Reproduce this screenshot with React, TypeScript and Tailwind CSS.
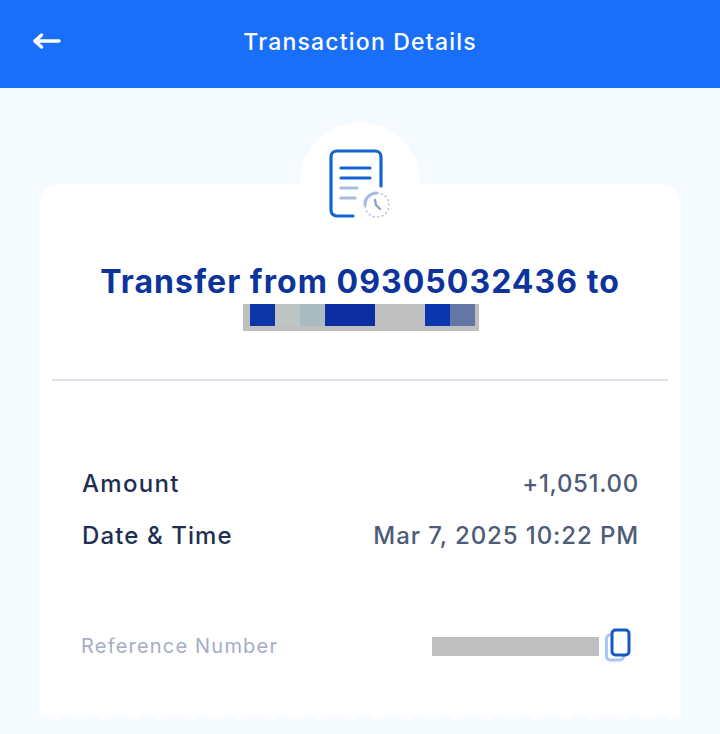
import React from 'react';

const BackArrow = () => (
  <svg width="30" height="20" viewBox="0 0 30 20" fill="none" stroke="white" strokeLinecap="round" strokeLinejoin="round">
    <path d="M3 11H27" strokeWidth="3.4" />
    <path d="M9.5 5L3 11L9.5 17" strokeWidth="3.4" />
  </svg>
);

const ReceiptIcon = () => (
  <svg width="64" height="72" viewBox="0 0 64 72" fill="none" strokeLinecap="round">
    <path d="M24 67H8C4.500 67 2 64.500 2 61V8C2 4.500 4.500 2 8 2H46C49.500 2 52 4.500 52 8V37" stroke="#1565d0" strokeWidth="3.200" />
    <path d="M12 19H41" stroke="#1565d0" strokeWidth="3.200" />
    <path d="M12 29H41" stroke="#1565d0" strokeWidth="3.200" />
    <path d="M12 39H28" stroke="#a9b9e3" strokeWidth="3.200" />
    <path d="M12 49H26" stroke="#a9b9e3" strokeWidth="3.200" />
    <path d="M36 56C36 49 41 44 48 44" stroke="#a9b9e3" strokeWidth="3.200" />
    <path d="M48 44C55 44 60 49 60 56C60 63 55 68 48 68C41 68 36 63 36 56" stroke="#b4c0dd" strokeWidth="1.500" strokeDasharray="1 3.500" />
    <path d="M46 51L47 56L51 60" stroke="#8ea2cf" strokeWidth="2.400" />
  </svg>
);

const CopyIcon = () => (
  <svg width="26" height="34" viewBox="0 0 26 34" fill="none">
    <rect x="1.500" y="7" width="17" height="25" rx="3.500" stroke="#a9c6f5" strokeWidth="3" />
    <rect x="7" y="2" width="17" height="25" rx="3.500" fill="white" stroke="#1458c4" strokeWidth="3" />
  </svg>
);

const Scallops = () => (
  <svg className="absolute bottom-0 left-0 block" width="640" height="10" viewBox="0 0 640 10">
    <defs>
      <pattern id="scallop" width="27" height="10" patternUnits="userSpaceOnUse">
        <path d="M0 0V3C6 3 8 9 13.500 9C19 9 21 3 27 3V0Z" fill="white" />
      </pattern>
    </defs>
    <rect width="640" height="10" fill="#f8fbff" />
    <rect width="640" height="10" fill="url(#scallop)" />
  </svg>
);

const Redacted = () => (
  <div className="ml-[2px] mt-[2px] flex h-[27px] w-[236px] bg-[#bfbfbf] pl-[7px] pb-[5px]">
    <div className="h-[22px] w-[25px] shrink-0 bg-[#0c35a8]" />
    <div className="h-[22px] w-[25px] shrink-0 bg-[#bcc4c4]" />
    <div className="h-[22px] w-[25px] shrink-0 bg-[#aabcc2]" />
    <div className="h-[22px] w-[50px] shrink-0 bg-[#0c2ea0]" />
    <div className="h-[22px] w-[50px] shrink-0 bg-[#bfbfbf]" />
    <div className="h-[22px] w-[25px] shrink-0 bg-[#0c35b0]" />
    <div className="h-[22px] w-[25px] shrink-0 bg-[#6476a6]" />
  </div>
);

const App = () => {
  return (
    <div className="h-[734px] w-[720px] overflow-hidden bg-[#f5faff] font-['Inter',sans-serif]">
      <header className="relative flex h-[88px] items-center justify-center bg-[#1a6ffa]">
        <div className="absolute left-[32px] top-[30px]">
          <BackArrow />
        </div>
        <h1 className="mb-[4px] text-[23px] font-medium tracking-[1.200px] text-white">Transaction Details</h1>
      </header>

      <main className="relative mx-[40px] mt-[96px] h-[536px] rounded-t-[20px] bg-white">
        <div className="absolute left-[260px] top-[-62px] h-[120px] w-[120px] rounded-full bg-white" />
        <div className="absolute left-[289px] top-[-35px]">
          <ReceiptIcon />
        </div>

        <div className="relative flex flex-col items-center pt-[77px]">
          <h2 className="text-[32px] leading-[41px] font-bold tracking-[1.050px] text-[#0c349c]">
            Transfer from 09305032436 to
          </h2>
          <Redacted />
        </div>

        <div className="mx-[12px] mt-[48px] h-[2px] bg-[#dfe1ec]" />

        <div className="mt-[87px] flex flex-col gap-[21px] pl-[42px] pr-[41px] text-[24px] leading-[31px]">
          <div className="flex justify-between">
            <span className="font-medium tracking-[1.300px] text-[#1e2f52]">Amount</span>
            <span className="font-medium tracking-[0.700px] text-[#4e5c78]">+1,051.00</span>
          </div>
          <div className="flex justify-between">
            <span className="font-medium tracking-[1.100px] text-[#1e2f52]">Date &amp; Time</span>
            <span className="font-medium tracking-[0.900px] text-[#4e5c78]">Mar 7, 2025 10:22 PM</span>
          </div>
        </div>

        <div className="mt-[77px] flex items-center justify-between pl-[41px] pr-[49px]">
          <span className="mt-[1px] text-[20px] tracking-[1.200px] text-[#a5adc4]">Reference Number</span>
          <div className="flex items-center gap-[6px]">
            <div className="mt-[3px] h-[19px] w-[167px] bg-[#bfbfbf]" />
            <CopyIcon />
          </div>
        </div>

        <Scallops />
      </main>
    </div>
  );
};

export default App;
